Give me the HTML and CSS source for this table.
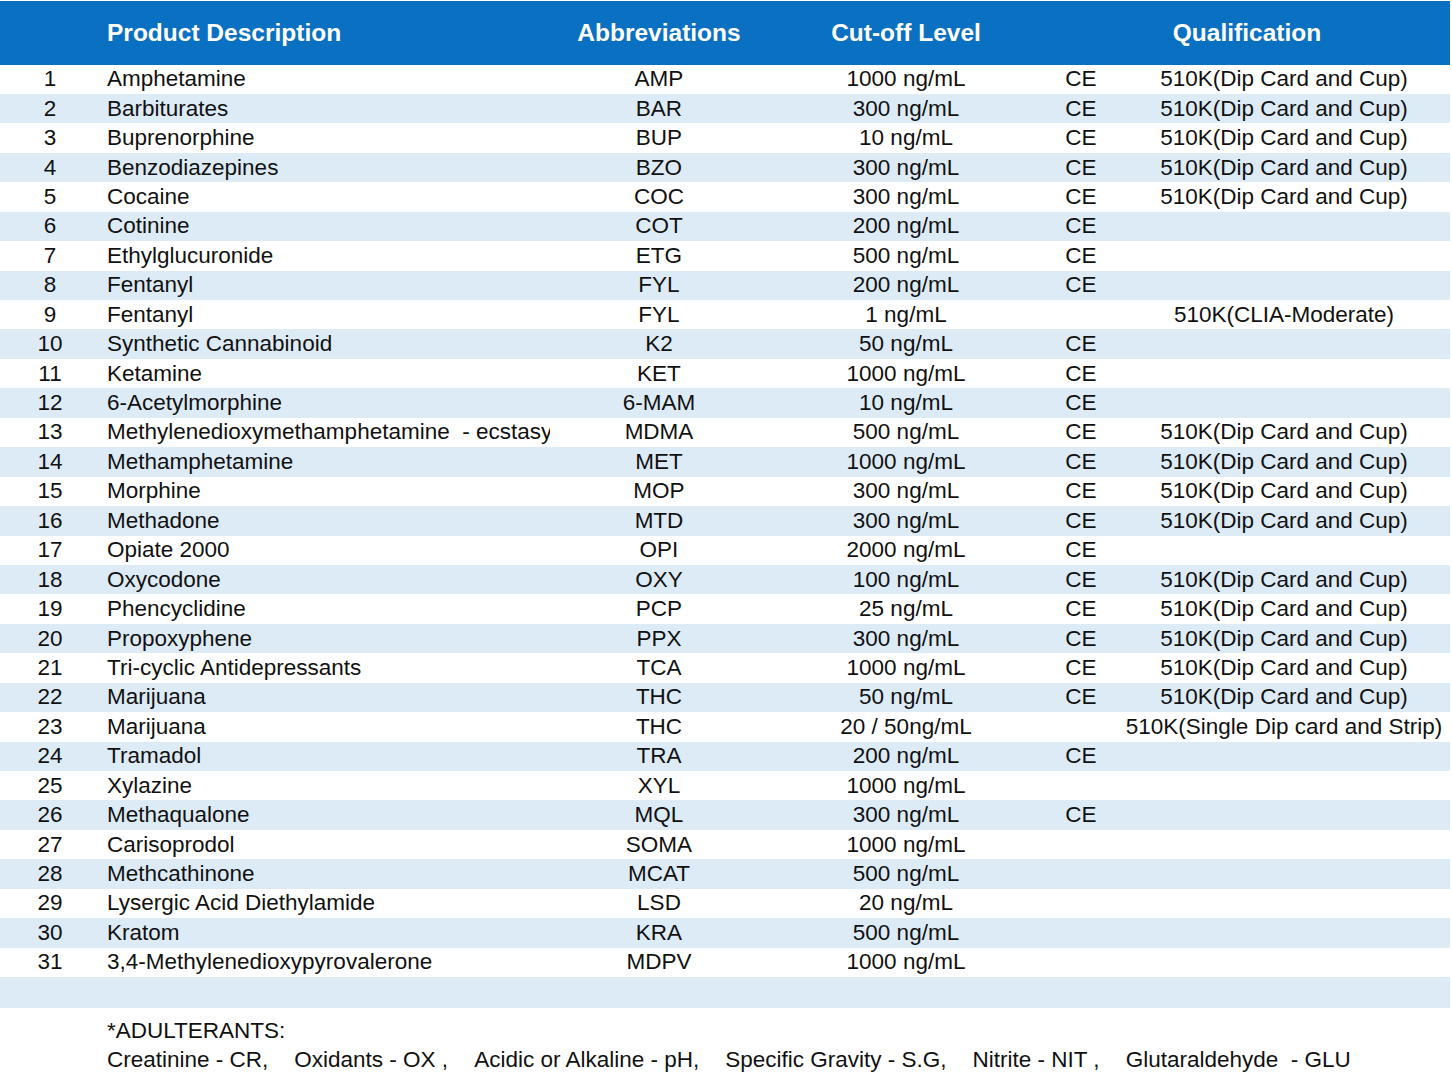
FILE: index.html
```html
<!DOCTYPE html>
<html>
<head>
<meta charset="utf-8">
<link rel="stylesheet" href="styles.css">
</head>
<body>
<div class="page">
<table class="grid">
<colgroup>
<col class="c-num"><col class="c-desc"><col class="c-abbr"><col class="c-cut"><col class="c-ce"><col class="c-qual">
</colgroup>
<thead>
<tr><th></th><th class="left">Product Description</th><th>Abbreviations</th><th>Cut-off Level</th><th colspan="2">Qualification</th></tr>
</thead>
<tbody>
<tr><td>1</td><td class="left">Amphetamine</td><td>AMP</td><td>1000 ng/mL</td><td>CE</td><td>510K(Dip Card and Cup)</td></tr>
<tr><td>2</td><td class="left">Barbiturates</td><td>BAR</td><td>300 ng/mL</td><td>CE</td><td>510K(Dip Card and Cup)</td></tr>
<tr><td>3</td><td class="left">Buprenorphine</td><td>BUP</td><td>10 ng/mL</td><td>CE</td><td>510K(Dip Card and Cup)</td></tr>
<tr><td>4</td><td class="left">Benzodiazepines</td><td>BZO</td><td>300 ng/mL</td><td>CE</td><td>510K(Dip Card and Cup)</td></tr>
<tr><td>5</td><td class="left">Cocaine</td><td>COC</td><td>300 ng/mL</td><td>CE</td><td>510K(Dip Card and Cup)</td></tr>
<tr><td>6</td><td class="left">Cotinine</td><td>COT</td><td>200 ng/mL</td><td>CE</td><td></td></tr>
<tr><td>7</td><td class="left">Ethylglucuronide</td><td>ETG</td><td>500 ng/mL</td><td>CE</td><td></td></tr>
<tr><td>8</td><td class="left">Fentanyl</td><td>FYL</td><td>200 ng/mL</td><td>CE</td><td></td></tr>
<tr><td>9</td><td class="left">Fentanyl</td><td>FYL</td><td>1 ng/mL</td><td></td><td>510K(CLIA-Moderate)</td></tr>
<tr><td>10</td><td class="left">Synthetic Cannabinoid</td><td>K2</td><td>50 ng/mL</td><td>CE</td><td></td></tr>
<tr><td>11</td><td class="left">Ketamine</td><td>KET</td><td>1000 ng/mL</td><td>CE</td><td></td></tr>
<tr><td>12</td><td class="left">6-Acetylmorphine</td><td>6-MAM</td><td>10 ng/mL</td><td>CE</td><td></td></tr>
<tr><td>13</td><td class="left">Methylenedioxymethamphetamine &nbsp;- ecstasy</td><td>MDMA</td><td>500 ng/mL</td><td>CE</td><td>510K(Dip Card and Cup)</td></tr>
<tr><td>14</td><td class="left">Methamphetamine</td><td>MET</td><td>1000 ng/mL</td><td>CE</td><td>510K(Dip Card and Cup)</td></tr>
<tr><td>15</td><td class="left">Morphine</td><td>MOP</td><td>300 ng/mL</td><td>CE</td><td>510K(Dip Card and Cup)</td></tr>
<tr><td>16</td><td class="left">Methadone</td><td>MTD</td><td>300 ng/mL</td><td>CE</td><td>510K(Dip Card and Cup)</td></tr>
<tr><td>17</td><td class="left">Opiate 2000</td><td>OPI</td><td>2000 ng/mL</td><td>CE</td><td></td></tr>
<tr><td>18</td><td class="left">Oxycodone</td><td>OXY</td><td>100 ng/mL</td><td>CE</td><td>510K(Dip Card and Cup)</td></tr>
<tr><td>19</td><td class="left">Phencyclidine</td><td>PCP</td><td>25 ng/mL</td><td>CE</td><td>510K(Dip Card and Cup)</td></tr>
<tr><td>20</td><td class="left">Propoxyphene</td><td>PPX</td><td>300 ng/mL</td><td>CE</td><td>510K(Dip Card and Cup)</td></tr>
<tr><td>21</td><td class="left">Tri-cyclic Antidepressants</td><td>TCA</td><td>1000 ng/mL</td><td>CE</td><td>510K(Dip Card and Cup)</td></tr>
<tr><td>22</td><td class="left">Marijuana</td><td>THC</td><td>50 ng/mL</td><td>CE</td><td>510K(Dip Card and Cup)</td></tr>
<tr><td>23</td><td class="left">Marijuana</td><td>THC</td><td>20 / 50ng/mL</td><td></td><td>510K(Single Dip card and Strip)</td></tr>
<tr><td>24</td><td class="left">Tramadol</td><td>TRA</td><td>200 ng/mL</td><td>CE</td><td></td></tr>
<tr><td>25</td><td class="left">Xylazine</td><td>XYL</td><td>1000 ng/mL</td><td></td><td></td></tr>
<tr><td>26</td><td class="left">Methaqualone</td><td>MQL</td><td>300 ng/mL</td><td>CE</td><td></td></tr>
<tr><td>27</td><td class="left">Carisoprodol</td><td>SOMA</td><td>1000 ng/mL</td><td></td><td></td></tr>
<tr><td>28</td><td class="left">Methcathinone</td><td>MCAT</td><td>500 ng/mL</td><td></td><td></td></tr>
<tr><td>29</td><td class="left">Lysergic Acid Diethylamide</td><td>LSD</td><td>20 ng/mL</td><td></td><td></td></tr>
<tr><td>30</td><td class="left">Kratom</td><td>KRA</td><td>500 ng/mL</td><td></td><td></td></tr>
<tr><td>31</td><td class="left">3,4-Methylenedioxypyrovalerone</td><td>MDPV</td><td>1000 ng/mL</td><td></td><td></td></tr>
<tr class="blank"><td></td><td></td><td></td><td></td><td></td><td></td></tr>
</tbody>
</table>
<div class="notes">
<div class="notes-title">*ADULTERANTS:</div>
<div class="notes-list">
<span>Creatinine - CR,</span>
<span>Oxidants - OX ,</span>
<span>Acidic or Alkaline - pH,</span>
<span>Specific Gravity - S.G,</span>
<span>Nitrite - NIT ,</span>
<span>Glutaraldehyde &nbsp;- GLU</span>
</div>
</div>
</div>
</body>
</html>
```

FILE: styles.css
```css
html, body {
  margin: 0;
  padding: 0;
  background: #ffffff;
}
body {
  font-family: "Liberation Sans", Arial, sans-serif;
  color: #111111;
}
.page {
  width: 1450px;
  padding-top: 1px;
}
.grid {
  width: 1450px;
  border-collapse: collapse;
  border-spacing: 0;
  table-layout: fixed;
}
.c-num { width: 100px; }
.c-desc { width: 450px; }
.c-abbr { width: 218px; }
.c-cut { width: 276px; }
.c-ce { width: 74px; }
.c-qual { width: 332px; }

.grid thead th {
  background: #0a70c2;
  color: #ffffff;
  font-weight: bold;
  font-size: 24.5px;
  height: 63.5px;
  padding: 0;
  text-align: center;
  vertical-align: middle;
  white-space: nowrap;
}
.grid th.left, .grid td.left {
  text-align: left;
  padding-left: 7px;
}
.grid tbody td {
  font-size: 22.5px;
  height: 29.44px;
  line-height: 26px;
  padding: 0;
  text-align: center;
  vertical-align: middle;
  white-space: nowrap;
  overflow: hidden;
}
.grid tbody td.left {
  text-overflow: clip;
}
.grid tbody tr:nth-child(even) td {
  background: #ddebf7;
}
.grid tbody tr.blank td {
  height: 31px;
}
.notes {
  padding: 8px 0 0 107px;
  font-size: 22.5px;
  line-height: 29px;
  color: #111111;
}
.notes-list {
  display: flex;
  gap: 26px;
  white-space: nowrap;
}
```
